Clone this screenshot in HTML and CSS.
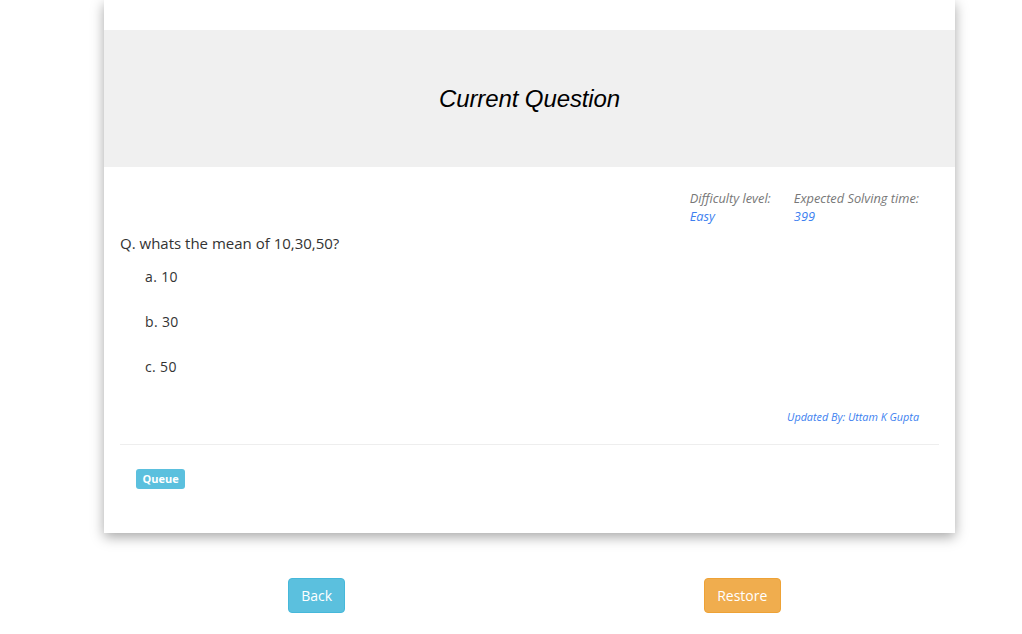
FILE: index.html
```html
<!DOCTYPE html>
<html>
<head>
<meta charset="utf-8">
<link rel="stylesheet" href="styles.css">
</head>
<body>
<div class="wrap">
  <div class="card">
    <div class="card-top"></div>
    <div class="band"><h1 class="title">Current Question</h1></div>
    <div class="content">
      <div class="meta">
        <div class="meta-item">
          <div class="meta-label">Difficulty level:</div>
          <div class="meta-value">Easy</div>
        </div>
        <div class="meta-item">
          <div class="meta-label">Expected Solving time:</div>
          <div class="meta-value">399</div>
        </div>
      </div>
      <div class="question">Q. whats the mean of 10,30,50?</div>
      <ul class="options">
        <li>a. 10</li>
        <li>b. 30</li>
        <li>c. 50</li>
      </ul>
      <div class="updated">Updated By: Uttam K Gupta</div>
      <hr class="divider">
      <div class="tags"><span class="badge">Queue</span></div>
    </div>
  </div>
  <div class="actions">
    <div class="col"><button class="btn btn-info">Back</button></div>
    <div class="col"><button class="btn btn-warning">Restore</button></div>
  </div>
</div>
</body>
</html>
```
FILE: styles.css
```css
html, body {
  margin: 0;
  padding: 0;
  background: #fff;
  font-family: "Open Sans", "DejaVu Sans", sans-serif;
  color: #333;
}
.wrap {
  width: 851px;
  margin-left: 104px;
}
.card {
  background: #fff;
  box-shadow: 0 4px 12px rgba(0,0,0,0.35);
}
.card-top {
  height: 30px;
}
.band {
  background: #f0f0f0;
  height: 137px;
  display: flex;
  align-items: center;
  justify-content: center;
}
.title {
  margin: 0;
  font-family: "Liberation Sans", Arial, sans-serif;
  font-style: italic;
  font-weight: normal;
  font-size: 24px;
  letter-spacing: -0.1px;
  color: #000;
}
.content {
  padding: 22px 16px 44px 16px;
  display: flex;
  flex-direction: column;
}
.meta {
  display: flex;
  justify-content: flex-end;
  gap: 23px;
  padding-right: 20px;
}
.meta-item {
  font-style: italic;
  font-size: 12.8px;
  line-height: 18px;
}
.meta-label {
  color: #777;
}
.meta-value {
  color: #3d7ff0;
}
.question {
  margin-top: 8px;
  font-size: 15px;
  line-height: 20px;
  color: #333;
}
.options {
  list-style: none;
  margin: 14px 0 0 0;
  padding: 0 0 0 25px;
  display: flex;
  flex-direction: column;
  gap: 25px;
}
.options li {
  font-size: 14px;
  line-height: 20px;
  letter-spacing: 0.35px;
}
.updated {
  margin-top: 32px;
  align-self: flex-end;
  margin-right: 20px;
  font-size: 10.8px;
  line-height: 16px;
  font-style: italic;
  color: #3d7ff0;
}
.divider {
  margin: 19px 0 0 0;
  border: 0;
  border-top: 1px solid #eee;
  height: 0;
}
.tags {
  margin-top: 24px;
  padding-left: 16px;
  display: flex;
}
.badge {
  background: #5bc0de;
  color: #fff;
  font-weight: bold;
  font-size: 11px;
  line-height: 20px;
  height: 20px;
  padding: 0 6.5px;
  border-radius: 3px;
}
.actions {
  display: flex;
  margin-top: 45px;
}
.col {
  flex: 1;
  display: flex;
  justify-content: center;
}
.btn {
  font-family: "Open Sans", "DejaVu Sans", sans-serif;
  font-size: 14px;
  line-height: 20px;
  padding: 7px 12px 6px 12px;
  border-radius: 4px;
  color: #fff;
  border: 1px solid transparent;
  cursor: pointer;
}
.btn-info {
  background: #5bc0de;
  border-color: #46b8da;
}
.btn-warning {
  background: #f0ad4e;
  border-color: #eea236;
  padding-left: 12.5px;
  padding-right: 12.5px;
}
```
